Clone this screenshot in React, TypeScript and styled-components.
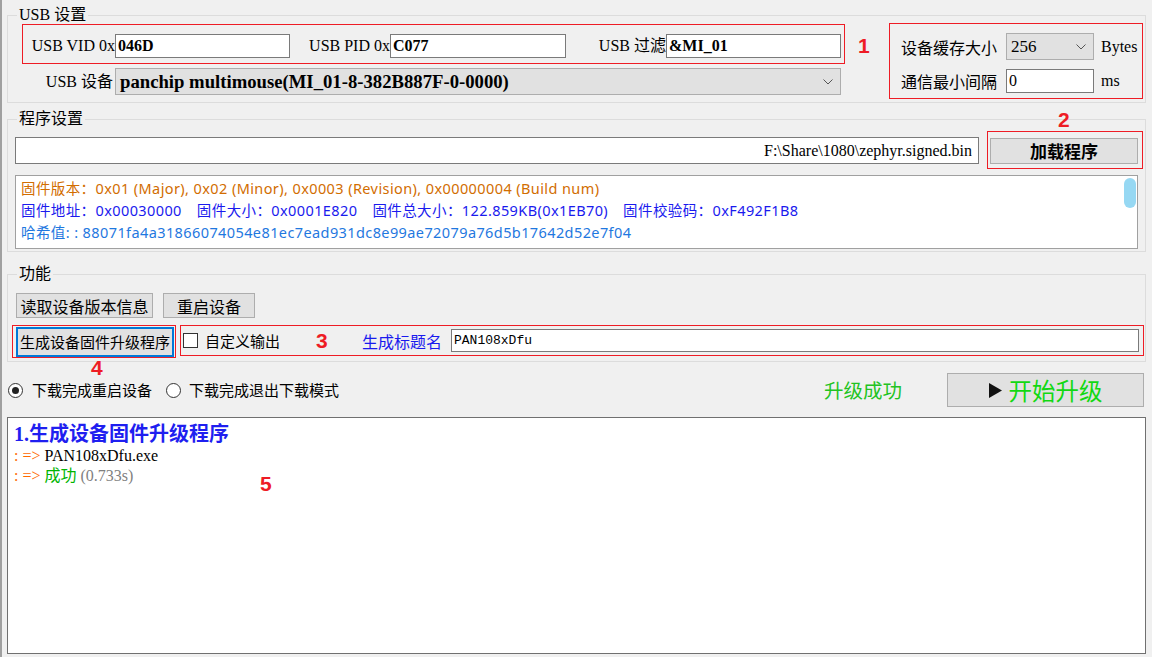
import React from "react";
import styled, { createGlobalStyle } from "styled-components";

const SERIF = `"Liberation Serif", "Noto Sans CJK SC", serif`;
const SANS = `"Noto Sans", "Noto Sans CJK SC", sans-serif`;
const CJK = `"Noto Sans CJK SC", "Liberation Serif", sans-serif`;
const RED = "#ee1c25";

const GlobalStyle = createGlobalStyle`
  html, body {
    margin: 0;
    padding: 0;
    background: #f0f0f0;
  }
  body {
    font-family: ${SERIF};
    color: #000;
  }
  * {
    box-sizing: border-box;
  }
`;

const Window = styled.div`
  width: 1152px;
  height: 657px;
  overflow: hidden;
  border-left: 2px solid #a0a0a0;
  padding-left: 5px;
  display: flex;
  flex-direction: column;
`;

const Group = styled.fieldset<{ $top: number }>`
  margin: ${(p) => p.$top}px 0 0 0;
  width: 1139px;
  min-width: 0;
  padding: 0;
  border: 1px solid #dcdcdc;
`;

const Legend = styled.legend`
  margin-left: 9px;
  padding: 0 2px;
  font: 16px/18px ${SERIF};
`;

const Mark = styled.span`
  font: bold 21px/24px "Liberation Sans", Arial, sans-serif;
  color: ${RED};
`;

const FloatMark = styled(Mark)<{ $x: number; $y: number }>`
  position: absolute;
  left: ${(p) => p.$x}px;
  top: ${(p) => p.$y}px;
`;

const RedFrame = styled.div`
  position: relative;
  border: 1px solid ${RED};
`;

/* ---------- USB 设置 ---------- */

const UsbBody = styled.div`
  display: flex;
  align-items: flex-start;
  padding: 0 1px 3px 14px;
`;

const UsbLeft = styled.div`
  display: flex;
  flex-direction: column;
  width: 823px;
`;

const IdBox = styled(RedFrame)`
  display: flex;
  align-items: center;
  height: 40px;
  padding: 4px 3px 0 7px;
`;

const Field = styled.div<{ $gap: number }>`
  display: flex;
  align-items: center;
  margin-left: ${(p) => p.$gap}px;
`;

const FieldLabel = styled.span<{ $w: number }>`
  width: ${(p) => p.$w}px;
  text-align: right;
  white-space: nowrap;
  font: 16px/20px ${SERIF};
`;

const TextBox = styled.input<{ $w: number; $h: number; $bold?: boolean; $right?: boolean }>`
  width: ${(p) => p.$w}px;
  height: ${(p) => p.$h}px;
  margin: 0;
  padding: ${(p) => (p.$right ? "0 6px 0 2px" : "0 2px")};
  border: 1px solid #7a7a7a;
  border-radius: 0;
  background: #fff;
  outline: none;
  color: #000;
  text-align: ${(p) => (p.$right ? "right" : "left")};
  font: ${(p) => (p.$bold ? "bold " : "")}16px/20px ${SERIF};
`;

const DeviceRow = styled.div`
  display: flex;
  align-items: center;
  height: 27px;
  margin-top: 4px;
`;

const DeviceLabel = styled.span`
  width: 93px;
  padding-right: 2px;
  text-align: right;
  font: 16px/20px ${SERIF};
`;

const Combo = styled.div<{ $w: number; $bold?: boolean; $size: number }>`
  width: ${(p) => p.$w}px;
  height: 27px;
  display: flex;
  align-items: center;
  justify-content: space-between;
  padding: 0 7px 0 4px;
  background: #e1e1e1;
  border: 1px solid #adadad;
  font: ${(p) => (p.$bold ? "bold " : "")}${(p) => p.$size}px/20px ${SERIF};
  white-space: nowrap;
`;

const MarkCell = styled.div`
  width: 44px;
  margin-top: 10px;
  padding-left: 13px;
`;

const SettingsBox = styled(RedFrame)`
  width: 254px;
  height: 76px;
  margin-top: -1px;
  display: grid;
  grid-template-columns: 105px 88px auto;
  row-gap: 9px;
  align-items: center;
  padding: 9px 0 5px 11px;
`;

const CjkLabel = styled.span`
  font: 16px/20px ${CJK};
  white-space: nowrap;
`;

const Unit = styled.span`
  margin-left: 7px;
  font: 16px/20px ${SERIF};
`;

/* ---------- 程序设置 ---------- */

const ProgramBody = styled.div`
  display: flex;
  flex-direction: column;
  padding: 3px 2px 2px 7px;
`;

const PathRow = styled.div`
  display: flex;
  align-items: flex-start;
`;

const PathBox = styled(TextBox)`
  margin-top: 6px;
`;

const LoadBox = styled(RedFrame)`
  width: 156px;
  height: 38px;
  margin-left: 8px;
  padding: 6px 0 0 2px;
`;

const Button = styled.button<{ $w: number; $h: number; $bold?: boolean; $focused?: boolean; $size?: number }>`
  width: ${(p) => p.$w}px;
  height: ${(p) => p.$h}px;
  margin: 0;
  padding: 0;
  display: flex;
  align-items: center;
  justify-content: center;
  gap: 7px;
  background: #e1e1e1;
  border: ${(p) => (p.$focused ? "2px solid #0078d7" : "1px solid #adadad")};
  border-radius: 0;
  color: #000;
  font: ${(p) => (p.$bold ? "bold " : "")}${(p) => p.$size ?? 16}px/20px ${CJK};
  white-space: nowrap;
`;

const InfoBox = styled.div`
  position: relative;
  width: 1123px;
  height: 74px;
  margin-top: 6px;
  padding: 1px 0 0 5px;
  background: #fff;
  border: 1px solid #a0a0a0;
  font: 14.5px/22px ${SANS};
  letter-spacing: 0.4px;
`;

const InfoLine = styled.div<{ $color: string }>`
  display: flex;
  gap: 15px;
  color: ${(p) => p.$color};
  white-space: nowrap;
`;

const ScrollThumb = styled.div`
  position: absolute;
  top: 2px;
  right: 1px;
  width: 12px;
  height: 30px;
  border-radius: 6px;
  background: #96d8f3;
`;

/* ---------- 功能 ---------- */

const FuncBody = styled.div`
  display: flex;
  flex-direction: column;
  padding: 10px 0 3px 4px;
`;

const ButtonRow = styled.div`
  display: flex;
  gap: 10px;
  margin-left: 4px;
`;

const ActionRow = styled.div`
  display: flex;
  align-items: flex-start;
  margin-top: 7px;
`;

const GenBox = styled(RedFrame)`
  width: 164px;
  height: 33px;
  padding: 1px 0 0 3px;
`;

const OptionBox = styled(RedFrame)`
  width: 964px;
  height: 31px;
  margin-left: 4px;
  display: flex;
  align-items: center;
  padding: 0 4px 0 2px;
`;

const CheckBox = styled.span`
  width: 15px;
  height: 15px;
  border: 1px solid #333;
  background: #fff;
  flex: none;
`;

const OptionText = styled.span<{ $w: number; $color?: string; $size?: number; $gap?: number }>`
  width: ${(p) => p.$w}px;
  margin-left: ${(p) => p.$gap ?? 0}px;
  flex: none;
  color: ${(p) => p.$color ?? "#000"};
  font: ${(p) => p.$size ?? 15}px/20px ${CJK};
  white-space: nowrap;
`;

const TitleInput = styled.input`
  flex: 1;
  height: 23px;
  margin: 0;
  padding: 0 2px;
  border: 1px solid #7a7a7a;
  border-radius: 0;
  outline: none;
  background: #fff;
  color: #000;
  font: 13px/18px "Liberation Mono", "DejaVu Sans Mono", monospace;
`;

/* ---------- 下载 / 状态 ---------- */

const RadioRow = styled.div`
  width: 1139px;
  height: 34px;
  margin-top: 11px;
  display: flex;
  align-items: center;
  padding: 0 2px 0 1px;
`;

const Radio = styled.span<{ $checked?: boolean; $gap: number }>`
  width: 15px;
  height: 15px;
  margin-left: ${(p) => p.$gap}px;
  border: 1px solid #333;
  border-radius: 50%;
  background: #fff;
  display: flex;
  align-items: center;
  justify-content: center;
  flex: none;

  &::after {
    content: "";
    width: 7px;
    height: 7px;
    border-radius: 50%;
    background: ${(p) => (p.$checked ? "#222" : "transparent")};
  }
`;

const RadioText = styled.span<{ $gap: number }>`
  margin-left: ${(p) => p.$gap}px;
  font: 15px/20px ${CJK};
  white-space: nowrap;
`;

const Status = styled.span`
  margin-left: auto;
  margin-right: 45px;
  color: #22c322;
  font: 19.5px/24px ${CJK};
`;

const StartText = styled.span`
  color: #12d812;
  font: 23.5px/28px ${CJK};
`;

const LogBox = styled.div`
  position: relative;
  width: 1139px;
  height: 237px;
  margin-top: 10px;
  padding: 4px 0 0 6px;
  background: #fff;
  border: 1px solid #707070;
`;

const LogTitle = styled.div`
  color: #1f1ff0;
  font: bold 20px/24px ${SERIF};
`;

const LogLine = styled.div`
  font: 16px/20px ${SERIF};
  white-space: nowrap;
`;

const LogSpan = styled.span<{ $color: string }>`
  color: ${(p) => p.$color};
`;

const Chevron = () => (
  <svg width="10" height="6" viewBox="0 0 10 6">
    <polyline points="0.5,0.5 5,5 9.5,0.5" fill="none" stroke="#555" strokeWidth="1" />
  </svg>
);

const Play = () => (
  <svg width="13" height="15" viewBox="0 0 13 15">
    <polygon points="0,0 13,7.5 0,15" fill="#111" />
  </svg>
);

export default function App() {
  return (
    <>
      <GlobalStyle />
      <Window>
        <Group $top={6}>
          <Legend>USB 设置</Legend>
          <UsbBody>
            <UsbLeft>
              <IdBox>
                <Field $gap={0}>
                  <FieldLabel $w={85}>USB VID 0x</FieldLabel>
                  <TextBox $w={175} $h={24} $bold readOnly value="046D" />
                </Field>
                <Field $gap={18}>
                  <FieldLabel $w={82}>USB PID 0x</FieldLabel>
                  <TextBox $w={176} $h={24} $bold readOnly value="C077" />
                </Field>
                <Field $gap={32}>
                  <FieldLabel $w={68}>USB 过滤</FieldLabel>
                  <TextBox $w={175} $h={24} $bold readOnly value="&MI_01" />
                </Field>
              </IdBox>
              <DeviceRow>
                <DeviceLabel>USB 设备</DeviceLabel>
                <Combo $w={726} $bold $size={18.7}>
                  panchip multimouse(MI_01-8-382B887F-0-0000)
                  <Chevron />
                </Combo>
              </DeviceRow>
            </UsbLeft>
            <MarkCell>
              <Mark>1</Mark>
            </MarkCell>
            <SettingsBox>
              <CjkLabel>设备缓存大小</CjkLabel>
              <Combo $w={88} $size={17}>
                256
                <Chevron />
              </Combo>
              <Unit>Bytes</Unit>
              <CjkLabel>通信最小间隔</CjkLabel>
              <TextBox $w={88} $h={24} readOnly value="0" />
              <Unit>ms</Unit>
            </SettingsBox>
          </UsbBody>
        </Group>

        <Group $top={7}>
          <Legend>程序设置</Legend>
          <ProgramBody>
            <PathRow>
              <PathBox $w={964} $h={27} $right readOnly value="F:\Share\1080\zephyr.signed.bin" />
              <LoadBox>
                <FloatMark $x={70} $y={-24}>2</FloatMark>
                <Button $w={148} $h={26} $bold $size={17}>
                  加载程序
                </Button>
              </LoadBox>
            </PathRow>
            <InfoBox>
              <InfoLine $color="#d26d00">
                固件版本：0x01 (Major), 0x02 (Minor), 0x0003 (Revision), 0x00000004 (Build num)
              </InfoLine>
              <InfoLine $color="#1a1aee">
                <span>固件地址：0x00030000</span>
                <span>固件大小：0x0001E820</span>
                <span>固件总大小：122.859KB(0x1EB70)</span>
                <span>固件校验码：0xF492F1B8</span>
              </InfoLine>
              <InfoLine $color="#1f78e0">哈希值: : 88071fa4a31866074054e81ec7ead931dc8e99ae72079a76d5b17642d52e7f04</InfoLine>
              <ScrollThumb />
            </InfoBox>
          </ProgramBody>
        </Group>

        <Group $top={13}>
          <Legend>功能</Legend>
          <FuncBody>
            <ButtonRow>
              <Button $w={137} $h={25}>
                读取设备版本信息
              </Button>
              <Button $w={92} $h={25}>
                重启设备
              </Button>
            </ButtonRow>
            <ActionRow>
              <GenBox>
                <Button $w={158} $h={30} $focused $size={15}>
                  生成设备固件升级程序
                </Button>
                <FloatMark $x={78} $y={30}>4</FloatMark>
              </GenBox>
              <OptionBox>
                <CheckBox />
                <OptionText $w={111} $gap={7}>
                  自定义输出
                </OptionText>
                <OptionText $w={46}>
                  <Mark>3</Mark>
                </OptionText>
                <OptionText $w={89} $color="#1a1aee" $size={16}>
                  生成标题名
                </OptionText>
                <TitleInput readOnly value="PAN108xDfu" />
              </OptionBox>
            </ActionRow>
          </FuncBody>
        </Group>

        <RadioRow>
          <Radio $checked $gap={0} />
          <RadioText $gap={9}>下载完成重启设备</RadioText>
          <Radio $gap={14} />
          <RadioText $gap={8}>下载完成退出下载模式</RadioText>
          <Status>升级成功</Status>
          <Button $w={197} $h={34}>
            <Play />
            <StartText>开始升级</StartText>
          </Button>
        </RadioRow>

        <LogBox>
          <LogTitle>1.生成设备固件升级程序</LogTitle>
          <LogLine>
            <LogSpan $color="#ff6a00">: =&gt; </LogSpan>
            PAN108xDfu.exe
          </LogLine>
          <LogLine>
            <LogSpan $color="#ff6a00">: =&gt; </LogSpan>
            <LogSpan $color="#00b400">成功</LogSpan> <LogSpan $color="#7f7f7f">(0.733s)</LogSpan>
          </LogLine>
          <FloatMark $x={252} $y={54}>5</FloatMark>
        </LogBox>
      </Window>
    </>
  );
}
